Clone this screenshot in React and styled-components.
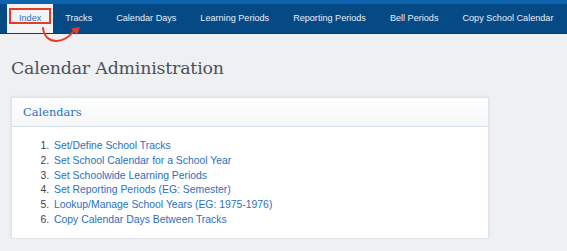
import React from 'react'
import styled, { createGlobalStyle } from 'styled-components'

const Global = createGlobalStyle`
  html, body {
    margin: 0;
    padding: 0;
    background: #eff0f2;
  }
  body {
    font-family: "Liberation Sans", Arial, sans-serif;
  }
`

const TopStrip = styled.div`
  height: 4px;
  background: #0d63ad;
`

const NavBar = styled.nav`
  position: relative;
  display: flex;
  height: 29px;
  padding-left: 7px;
  background: #064a85;
  border-bottom: 1px solid #0a3f6f;
`

const Tab = styled.div`
  position: relative;
  display: flex;
  align-items: center;
  padding: 0 12px 1px 12px;
  font-size: 9.1px;
  color: ${props => (props.active ? '#2c73c2' : '#e6eef7')};
  background: ${props => (props.active ? '#f2f3f5' : 'transparent')};
  white-space: nowrap;
`

const Highlight = styled.div`
  position: absolute;
  left: 2px;
  right: 2px;
  top: 4px;
  bottom: 9px;
  border: 2px solid #e83a26;
  pointer-events: none;
`

const Arrow = styled.svg`
  position: absolute;
  left: 0;
  top: -4px;
  overflow: visible;
  pointer-events: none;
`

const Page = styled.main`
  padding: 24px 11px 0 11px;
  width: 478px;
`

const Title = styled.h1`
  margin: 0 0 19px 0;
  font-family: "DejaVu Serif", "Liberation Serif", serif;
  font-weight: normal;
  font-size: 17.4px;
  color: #4b5159;
  letter-spacing: -0.2px;
`

const Panel = styled.section`
  background: #ffffff;
  border: 1px solid #dfe3e8;
  box-shadow: 0 0 3px rgba(0, 0, 0, 0.08);
`

const PanelHeader = styled.header`
  height: 28px;
  display: flex;
  align-items: center;
  padding-left: 11px;
  background: linear-gradient(#ffffff, #f4f6f8);
  border-bottom: 1px solid #d3dfea;
  font-family: "DejaVu Serif", "Liberation Serif", serif;
  font-size: 11.4px;
  color: #2a70bd;
`

const List = styled.ol`
  margin: 0;
  padding: 12px 0 10px 40px;
  font-size: 10.4px;
  line-height: 14.8px;
  color: #3f4348;

  li {
    padding-left: 2px;
  }
`

const Link = styled.a`
  color: #2a70c0;
  text-decoration: none;
`

const tabs = [
  'Index',
  'Tracks',
  'Calendar Days',
  'Learning Periods',
  'Reporting Periods',
  'Bell Periods',
  'Copy School Calendar',
]

const items = [
  'Set/Define School Tracks',
  'Set School Calendar for a School Year',
  'Set Schoolwide Learning Periods',
  'Set Reporting Periods (EG: Semester)',
  'Lookup/Manage School Years (EG: 1975-1976)',
  'Copy Calendar Days Between Tracks',
]

export default function App() {
  return (
    <>
      <Global />
      <TopStrip />
      <NavBar>
        {tabs.map((t, i) => (
          <Tab key={t} active={i === 0}>
            {t}
            {i === 0 && <Highlight />}
          </Tab>
        ))}
        <Arrow width="100" height="50" viewBox="0 0 100 50">
          <path
            d="M43 28 C 44 37, 50 41.5, 57 41 C 64 40.5, 70 36, 74 31"
            fill="none"
            stroke="#ee3a22"
            strokeWidth="2"
            strokeLinecap="round"
          />
          <path d="M80 27 L71 28.5 L77 35 Z" fill="#ee3a22" />
        </Arrow>
      </NavBar>
      <Page>
        <Title>Calendar Administration</Title>
        <Panel>
          <PanelHeader>Calendars</PanelHeader>
          <List>
            {items.map(item => (
              <li key={item}>
                <Link href="#">{item}</Link>
              </li>
            ))}
          </List>
        </Panel>
      </Page>
    </>
  )
}
